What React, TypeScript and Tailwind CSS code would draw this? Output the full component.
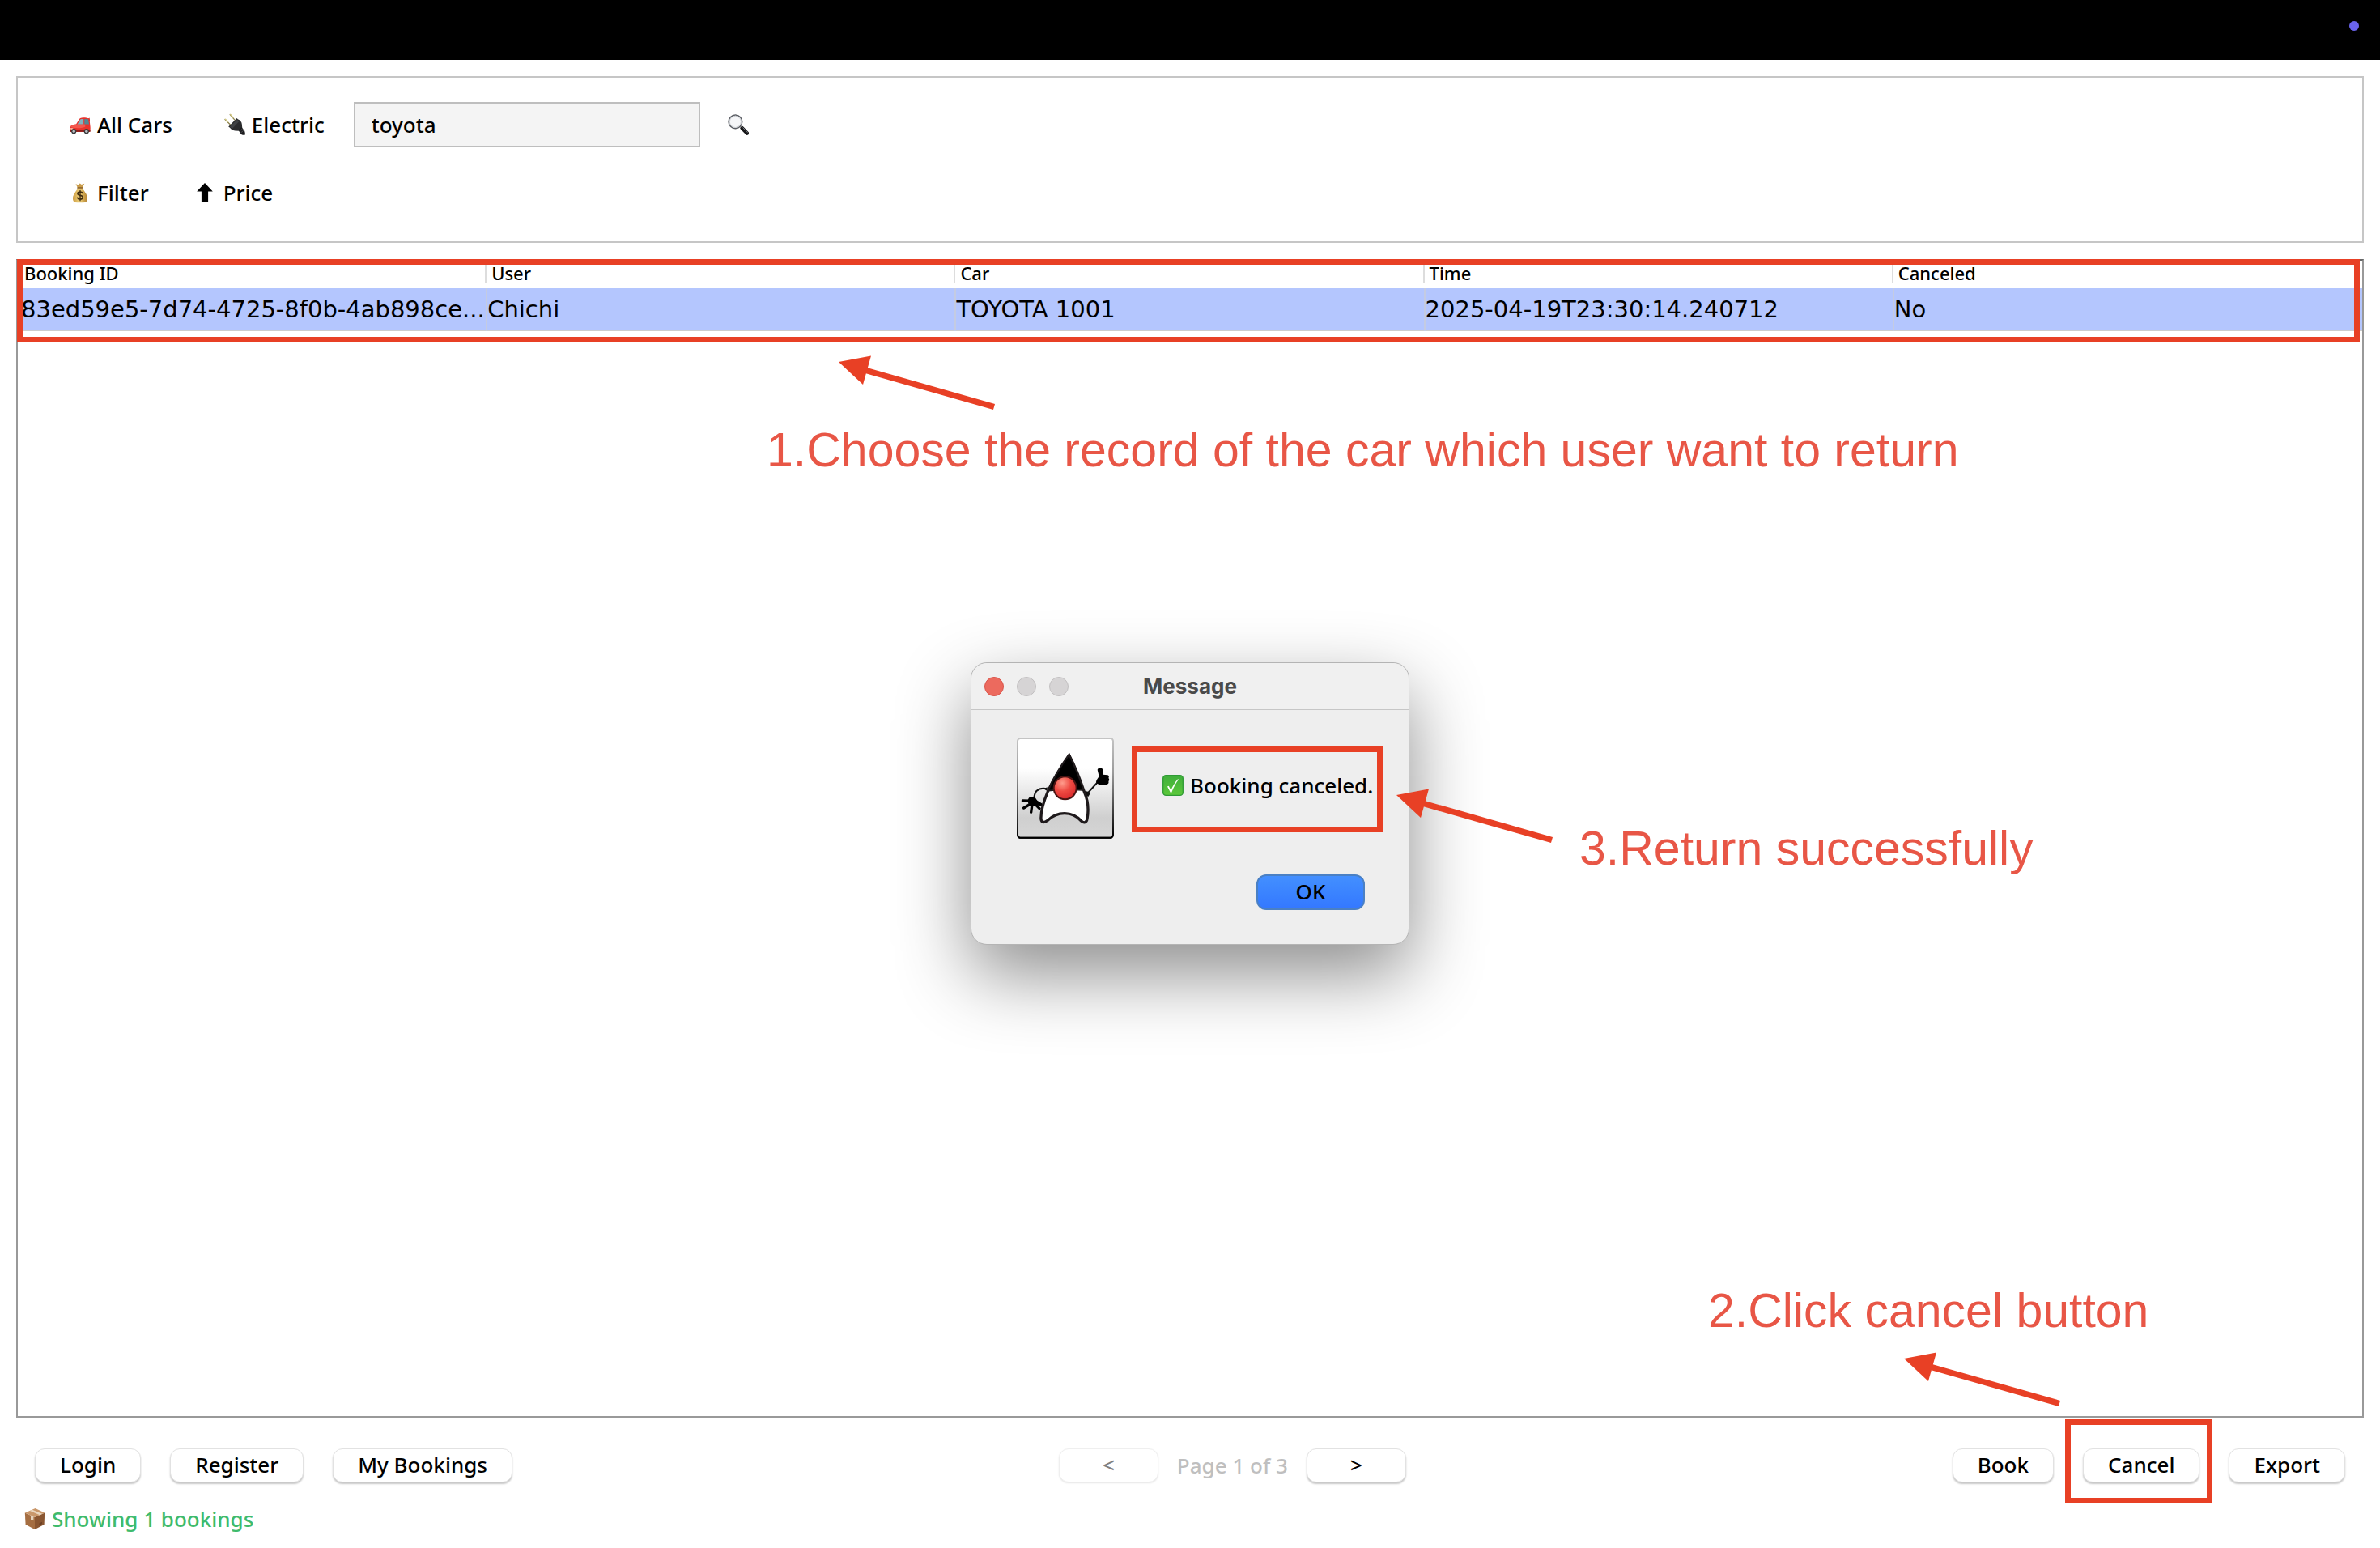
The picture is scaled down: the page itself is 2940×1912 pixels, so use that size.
import type { ReactNode } from "react";

const iconClass = "h-[28px] w-[26px] shrink-0";

function CarIcon() {
  return (
    <svg className={iconClass} viewBox="0 0 26 28" aria-hidden="true">
      <path d="M22 7l2.600-1.600.4 3-1 3z" fill="#c9342c" />
      <path d="M1 16.500c.4-1.600 3.600-2.700 7-3L12 7c.7-1.100 1.500-1.500 3-1.600 3-.2 6-.1 8 .8.9.4 1.400 1 1.600 2L25.600 17c.2 2.400 0 4.600-.6 6H1.500C.4 21.500.5 18.500 1 16.500z" fill="#e8322c" />
      <path d="M1 16.500c.4-1.600 3.600-2.700 7-3h11l.4 3c-3 2-12 2.500-18.400.6z" fill="#f4574d" />
      <path d="M9.600 13.400L13 7.800c.4-.6.900-.8 1.600-.8h2.600v6.400z" fill="#7fb4c0" />
      <path d="M18.300 7h3.600c.7 0 1 .3 1.200 1l1 5.400h-5.800z" fill="#4f8794" />
      <path d="M1.200 18.200l3 .4.300 1.200-3.200-.2z" fill="#fff3d0" />
      <path d="M1 21h24.600v1.800H1z" fill="#8f1d1a" />
      <circle cx="5.200" cy="22.200" r="3.100" fill="#3a3a3c" />
      <circle cx="5.200" cy="22.200" r="1.700" fill="#b9bcc0" />
      <circle cx="20.800" cy="22.200" r="3.100" fill="#3a3a3c" />
      <circle cx="20.800" cy="22.200" r="1.700" fill="#b9bcc0" />
    </svg>
  );
}

function PlugIcon() {
  return (
    <svg className={iconClass} viewBox="0 0 26 28" aria-hidden="true">
      <g fill="none" strokeWidth="1.300" strokeLinecap="round">
        <path d="M1 7.500l7 7M7.200 1.500l6.600 7.600" stroke="#8d8350" />
        <path d="M1.600 7.200l3 3M7.800 1.500l3 3.500" stroke="#d9cf8a" />
      </g>
      <path d="M5.200 16.600L15.600 6l1.200 1.200c3 1.300 4.700 3.300 5 6l.5 5.200-3.600 3.400-5.400-.4c-3-.3-5-1.600-6.300-3.600z" fill="#2a2b2d" />
      <path d="M7 16.600L15.800 7.700l2.600 2.200-8.600 9z" fill="#3f4144" />
      <path d="M17.500 20.500l4-3.500 3.300 4.200c1 1.600 1.200 3.600.8 5.600-2.600.3-4.300-.4-5.500-1.800z" fill="#1d1d1f" />
      <path d="M18.800 22.300l3.800-3.400M20.300 24.200l3.900-3.300" stroke="#55575a" strokeWidth=".9" />
    </svg>
  );
}

function SearchIcon() {
  return (
    <svg className={iconClass} viewBox="0 0 26 28" aria-hidden="true">
      <path d="M16 17.500l8 7.500" stroke="#3b3d42" strokeWidth="2" />
      <path d="M17.800 18.300l6 6.200" stroke="#17181a" strokeWidth="4.600" strokeLinecap="round" />
      <path d="M18.800 17.800l5.400 5.600" stroke="#7d8188" strokeWidth="1" strokeLinecap="round" />
      <circle cx="9.400" cy="10.400" r="8.300" fill="#f5f6f8" stroke="#5a5d63" strokeWidth="1.500" />
      <circle cx="9.400" cy="10.400" r="7.100" fill="none" stroke="#c6c9ce" strokeWidth="1" />
    </svg>
  );
}

function MoneyIcon() {
  return (
    <svg className={iconClass} viewBox="0 0 26 28" aria-hidden="true">
      <defs>
        <linearGradient id="bag" x1="0" x2="1" y1="0" y2="0">
          <stop offset="0" stopColor="#c9983f" />
          <stop offset=".45" stopColor="#f0d27a" />
          <stop offset="1" stopColor="#b27f2d" />
        </linearGradient>
      </defs>
      <path d="M7.500 3.200l3 1 2.200-1.800 2 1.600 3.600-1.200-2.800 5.800h-5.200z" fill="#c89b4a" />
      <path d="M10.600 8.200h4.800c1.500 2.500 6.600 7.600 6.600 12.800 0 3.200-1.200 4.600-3 4.900-3.800.5-8.200.5-12 0-1.800-.3-3-1.700-3-4.900 0-5.200 5.100-10.300 6.600-12.800z" fill="url(#bag)" />
      <path d="M10 8h6" stroke="#8b5f24" strokeWidth="1.700" strokeLinecap="round" />
      <g fill="none" stroke="#3e2b10" strokeWidth="1.700" strokeLinecap="round">
        <path d="M16 14.500c-.6-1-1.600-1.400-3-1.400-1.800 0-3 .8-3 2.200 0 3.100 6.200 1.200 6.200 4.400 0 1.500-1.300 2.300-3.200 2.300-1.500 0-2.700-.6-3.200-1.700" />
        <path d="M13 11.500v12.300" strokeWidth="1.300" />
      </g>
    </svg>
  );
}

function UpIcon() {
  return (
    <svg className={iconClass} viewBox="0 0 26 28" aria-hidden="true">
      <path d="M11 2l9.800 10.400h-5.700V26H6.900V12.400H1.200z" fill="#000" />
    </svg>
  );
}

function PackageIcon() {
  return (
    <svg className={iconClass} viewBox="0 0 26 28" aria-hidden="true">
      <path d="M.8 6.500L13 12v15L1.600 21z" fill="#a56e42" />
      <path d="M25.200 6.500L13 12v15l11.600-6z" fill="#8a5631" />
      <path d="M.8 6.500L13.600 1l11.600 5.500L13 12z" fill="#c9976a" />
      <path d="M6.800 4l12.300 5.300 3.200-1.500L9.800 2.700z" fill="#ead7bf" />
      <path d="M8 9.800l3.400 1.500v5L9.800 15l-1.800.2z" fill="#e4d2bb" />
      <path d="M18.500 19.500l3.500-1.800v2.600l-3.500 1.800z" fill="#6c4024" />
    </svg>
  );
}

function CheckIcon() {
  return (
    <svg className={iconClass} viewBox="0 0 26 28" aria-hidden="true">
      <defs>
        <linearGradient id="tick" x1="0" x2="0" y1="0" y2="1">
          <stop offset="0" stopColor="#3fae3b" />
          <stop offset="1" stopColor="#5cc83a" />
        </linearGradient>
      </defs>
      <rect x=".7" y="1.700" width="24.600" height="24.600" rx="3.600" fill="url(#tick)" stroke="#2f9a35" strokeWidth="1.300" />
      <path d="M6 15.500l1.700-.8 2.800 5.200C12.600 15 15.500 10 19 6.200l1 .6c-3.600 4.600-6.400 10-8.700 16H9.800z" fill="#fff" />
    </svg>
  );
}

function DukeIcon() {
  return (
    <svg className="h-[125px] w-[120px] shrink-0" viewBox="48 33 360 375" role="img" aria-label="Java Duke">
      <defs>
        <linearGradient id="tile" x1="0" x2="0" y1="0" y2="1">
          <stop offset=".3" stopColor="#ffffff" />
          <stop offset=".8" stopColor="#cfcfcf" />
          <stop offset="1" stopColor="#d6d6d6" />
        </linearGradient>
        <linearGradient id="tileEdge" x1="0" x2="0" y1="0" y2="1">
          <stop offset="0" stopColor="#c4c4c4" />
          <stop offset=".35" stopColor="#9a9a9a" />
          <stop offset=".75" stopColor="#3c3c3c" />
          <stop offset="1" stopColor="#000000" />
        </linearGradient>
        <radialGradient id="nose" cx=".38" cy=".28" r=".75">
          <stop offset="0" stopColor="#ff9c8c" />
          <stop offset=".5" stopColor="#ee4a42" />
          <stop offset="1" stopColor="#d92a2c" />
        </radialGradient>
      </defs>
      <rect x="51" y="36" width="354" height="368" rx="10" fill="url(#tile)" stroke="url(#tileEdge)" strokeWidth="6" />
      <path d="M58 404H398" stroke="#000" strokeWidth="6" strokeLinecap="round" />
      <path d="M160 223c-14-3-30 0-39 8-7 8-8 16-9 27" fill="none" stroke="#111" strokeWidth="6" />
      <path d="M147 223l14-6v14z" fill="#111" />
      <g fill="none" stroke="#000" strokeLinecap="round">
        <path d="M106 268L70 267M106 274l-32 20M106 272l-5 38M108 272l24 24" strokeWidth="10" />
        <path d="M106 262l32 20" strokeWidth="12" />
      </g>
      <path d="M92 258c6-8 20-8 26 0l12 18c2 8-4 12-12 12l-20-2c-8-6-12-20-6-28z" fill="#000" />
      <path d="M308 242l40-44" stroke="#111" strokeWidth="6" />
      <path d="M305 232l10 2 4 8-6 10-9-4z" fill="#111" />
      <path d="M347 152c4-9 15-9 19-2l1 20 18 2c6 2 5 8 3 11 4 4 3 10 0 12 2 6-1 10-5 11-4 5-10 5-16 3-10 1-20-2-25-10 0-8 5-14 11-22z" fill="#000" />
      <path d="M242 98c-30 42-60 92-79 135-14 34-27 74-25 103 2 14 13 12 23 5 38-36 92-36 126 1 9 9 20 7 22-8 6-32 3-68-11-100-14-42-36-98-56-136z" fill="#fff" stroke="#1f1a1c" strokeWidth="10" strokeLinejoin="miter" />
      <path d="M242 96c-30 42-62 94-78 134l24-3 78-1 30 2c-14-42-36-96-54-132z" fill="#000" stroke="#1f1a1c" strokeWidth="6" />
      <circle cx="227" cy="220" r="42" fill="url(#nose)" stroke="#4a1413" strokeWidth="6" />
    </svg>
  );
}

function Arrow({ className }: { className: string }) {
  return (
    <svg className={`absolute h-[70px] w-[200px] ${className}`} viewBox="0 0 200 70" aria-hidden="true">
      <path d="M34 19L194 64.500" stroke="#e84025" strokeWidth="7.500" />
      <path d="M2 9L42 1.500 32 37z" fill="#e84025" />
    </svg>
  );
}

function Note({ className, children }: { className: string; children: ReactNode }) {
  return (
    <p className={`absolute whitespace-nowrap font-['Liberation_Sans',sans-serif] text-[59px] leading-none font-normal text-[#e85646] ${className}`}>
      {children}
    </p>
  );
}

function ToolButton({ icon, label }: { icon: ReactNode; label: string }) {
  return (
    <button type="button" className="flex h-14 items-center gap-2 px-7">
      {icon}
      {label}
    </button>
  );
}

const pushButton =
  "h-[42px] rounded-xl border border-[#e2e2e2] bg-white px-[30px] pb-0.5 leading-none shadow-[0_2px_2px_rgba(0,0,0,0.22)]";

const columns = ["Booking ID", "User", "Car", "Time", "Canceled"];
const booking = ["83ed59e5-7d74-4725-8f0b-4ab898ce...", "Chichi", "TOYOTA 1001", "2025-04-19T23:30:14.240712", "No"];

function Dialog() {
  return (
    <section
      role="dialog"
      aria-labelledby="dialog-title"
      className="absolute top-[818px] left-1/2 w-[542px] -translate-x-1/2 rounded-[20px] border border-[#b4b4b4] bg-[#eeeeee] shadow-[0_36px_90px_rgba(0,0,0,0.45)]"
    >
      <header className="relative flex h-[58px] items-center justify-center rounded-t-[20px] border-b border-[#c6c6c6] bg-[#f0f0f0]">
        <div className="absolute left-4 flex gap-4">
          <button type="button" aria-label="Close" className="size-6 rounded-full border border-[#d9554c] bg-[#ec6a5e]" />
          <button type="button" aria-label="Minimize" className="size-6 rounded-full border border-[#c2c0c1] bg-[#d6d4d5]" />
          <button type="button" aria-label="Zoom" className="size-6 rounded-full border border-[#c2c0c1] bg-[#d6d4d5]" />
        </div>
        <h2 id="dialog-title" className="font-['Inter',sans-serif] text-[26px] font-bold text-[#4a4a4a]">
          Message
        </h2>
      </header>
      <div className="flex items-start gap-[22px] pt-[34px] pl-14">
        <DukeIcon />
        <div className="mt-[11px] flex h-[106px] w-[310px] items-center gap-2 border-[7px] border-[#e84025] pb-2.5 pl-[31px] whitespace-nowrap">
          <CheckIcon />
          Booking canceled.
        </div>
      </div>
      <div className="flex justify-end pt-11 pr-[54px] pb-[42px]">
        <button
          type="button"
          className="h-11 w-[134px] rounded-xl border-2 border-[#4a80c4] bg-linear-to-b from-[#438fff] to-[#3478ff] pb-0.5 leading-none"
        >
          OK
        </button>
      </div>
      <Arrow className="top-[154px] left-[523px]" />
      <Note className="top-[200px] left-[751px]">3.Return successfully</Note>
    </section>
  );
}

export default function App() {
  return (
    <div className="relative flex min-h-screen flex-col overflow-hidden bg-white font-['Noto_Sans',sans-serif] text-[26px] font-medium text-black">
      <div className="flex h-[74px] items-start justify-end bg-black pt-[26px] pr-[26px]">
        <span className="size-3 rounded-full bg-[#6a64ee]" />
      </div>

      <main className="flex flex-1 flex-col gap-5 px-5 pt-5">
        <div className="flex flex-col gap-7 border-2 border-[#c6c6c6] px-9 pt-[30px] pb-8">
          <div className="flex items-center gap-2">
            <ToolButton icon={<CarIcon />} label="All Cars" />
            <ToolButton icon={<PlugIcon />} label="Electric" />
            <input
              type="text"
              aria-label="Search cars"
              defaultValue="toyota"
              className="h-14 w-[428px] border-2 border-[#bebebe] bg-[#f4f4f4] px-5"
            />
            <button type="button" aria-label="Search" className="px-[26px]">
              <SearchIcon />
            </button>
          </div>
          <div className="flex items-center gap-0.5">
            <ToolButton icon={<MoneyIcon />} label="Filter" />
            <ToolButton icon={<UpIcon />} label="Price" />
          </div>
        </div>

        <div className="relative flex-1 border-2 border-t-[#666666] border-[#999999]">
          <table className="w-full table-fixed border-collapse text-left whitespace-nowrap">
            <thead>
              <tr className="h-[34px] text-[22px]">
                {columns.map((column) => (
                  <th key={column} scope="col" className="group p-0 align-top font-medium">
                    <div className="mt-1 h-[24px] border-r-2 border-[#dddddd] pl-[6px] leading-[22px] group-first:pl-2 group-last:border-r-0">
                      {column}
                    </div>
                  </th>
                ))}
              </tr>
            </thead>
            <tbody>
              <tr className="h-[52px] border-b-2 border-[#cccccc] bg-[#b4c6fe] font-['DejaVu_Sans',sans-serif] text-[29px] font-normal">
                {booking.map((value) => (
                  <td key={value} className="border-r-2 border-[#c4cbe2] p-0 leading-[50px] first:pl-1 last:border-r-0">
                    {value}
                  </td>
                ))}
              </tr>
            </tbody>
          </table>
          <div className="absolute -top-[2px] right-[3px] -left-px h-[103px] border-[7px] border-[#e84025]" />
          <Arrow className="top-[116px] left-[1012px]" />
          <Note className="top-[205px] left-[925px]">1.Choose the record of the car which user want to return</Note>
        </div>
      </main>

      <footer className="pt-[38px] pb-4">
        <div className="flex items-center justify-between px-[43px]">
          <div className="flex gap-9">
            <button type="button" className={pushButton}>Login</button>
            <button type="button" className={pushButton}>Register</button>
            <button type="button" className={pushButton}>My Bookings</button>
          </div>
          <nav aria-label="Pages" className="flex items-center gap-[23px]">
            <button
              type="button"
              disabled
              aria-label="Previous page"
              className="h-[42px] w-[123px] rounded-xl border border-[#efefef] bg-white pb-0.5 leading-none text-[#808080] shadow-[0_1px_2px_rgba(0,0,0,0.1)]"
            >
              &lt;
            </button>
            <span className="leading-[42px] text-[#bfbfbf]">Page 1 of 3</span>
            <button type="button" aria-label="Next page" className={`w-[123px] ${pushButton}`}>
              &gt;
            </button>
          </nav>
          <div className="flex gap-9">
            <button type="button" className={pushButton}>Book</button>
            <div className="relative">
              <button type="button" className={pushButton}>Cancel</button>
              <div className="pointer-events-none absolute -top-[36px] -right-[16px] -bottom-[26px] -left-[22px] border-[7px] border-[#e84025]" />
              <Arrow className="-top-[120px] -left-[223px]" />
              <Note className="-top-[199px] -left-[463px]">2.Click cancel button</Note>
            </div>
            <button type="button" className={pushButton}>Export</button>
          </div>
        </div>
        <p className="mt-[25px] flex h-10 items-center gap-2 pl-[30px] text-[#3fbb6c]">
          <PackageIcon />
          Showing 1 bookings
        </p>
      </footer>

      <Dialog />
    </div>
  );
}
